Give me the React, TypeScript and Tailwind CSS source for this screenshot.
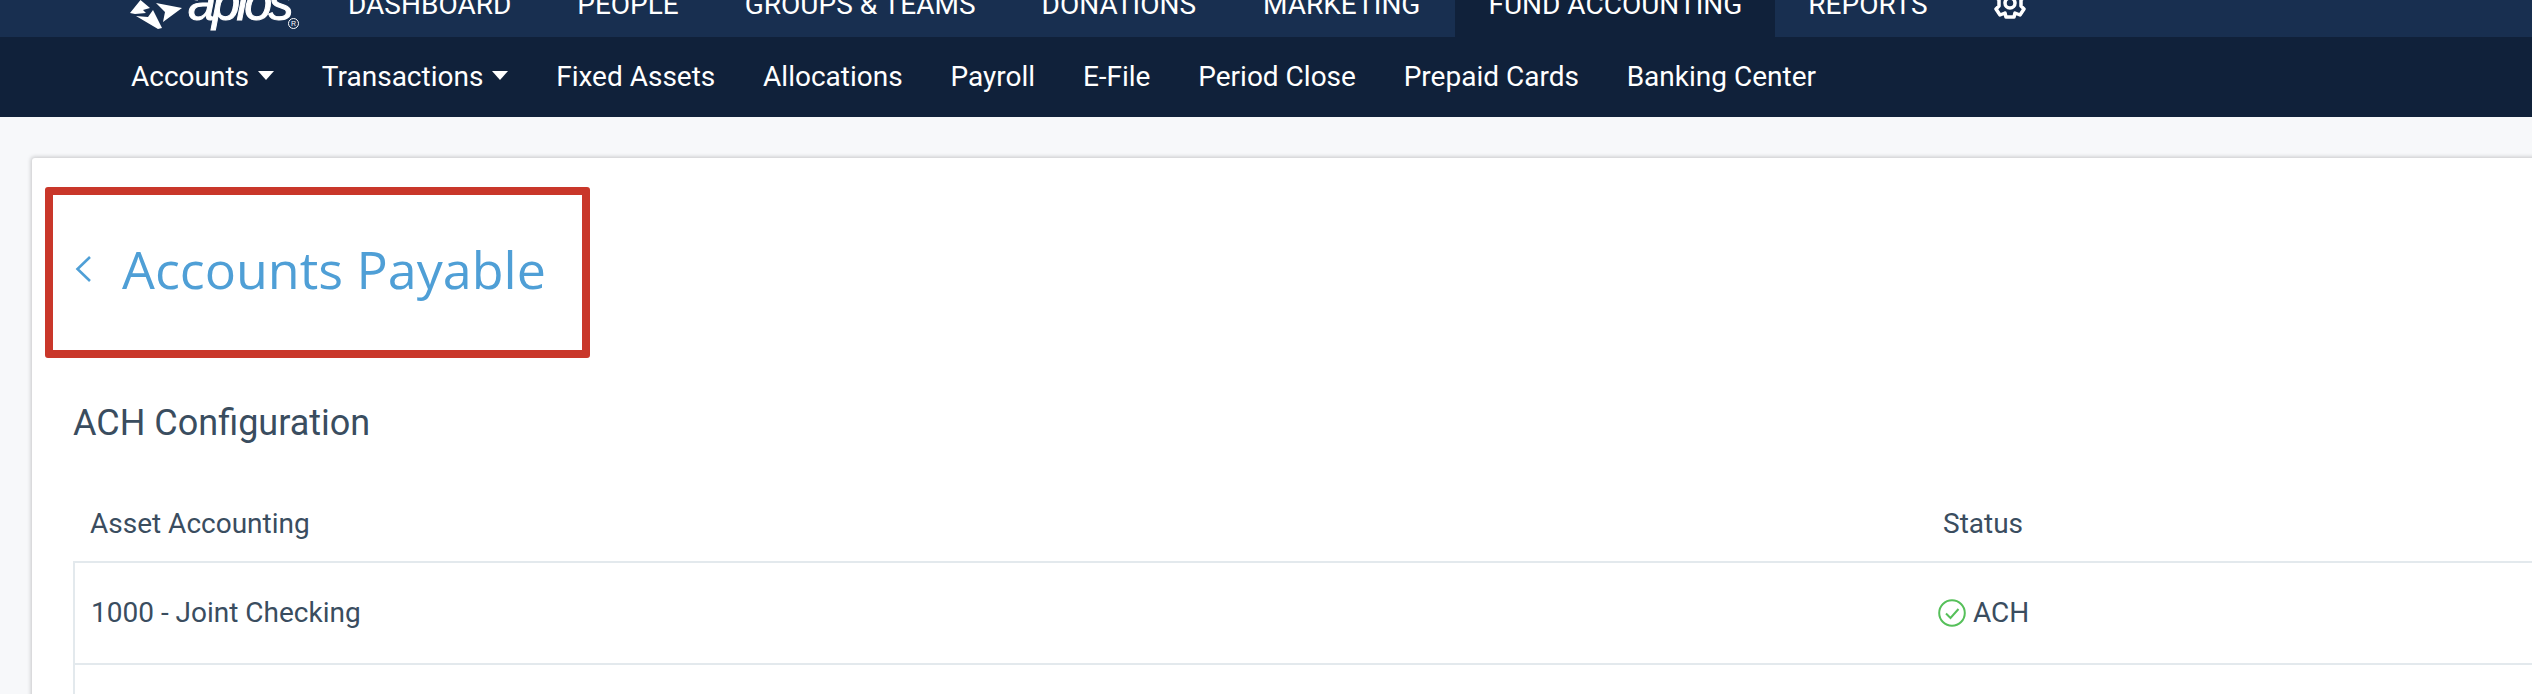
const mainLinks = [
  {label: 'DASHBOARD', className: 'pr-[33px]'},
  {label: 'PEOPLE', className: 'px-[33px]'},
  {label: 'GROUPS & TEAMS', className: 'px-[33px]'},
  {label: 'DONATIONS', className: 'px-[33px]'},
  {label: 'MARKETING', className: 'pl-[34px] pr-[35px]'},
  {label: 'FUND ACCOUNTING', className: 'px-[33px] bg-[#10213a]'},
  {label: 'REPORTS', className: 'px-[33px]'},
]

const subLinks = [
  {label: 'Accounts', caret: true},
  {label: 'Transactions', caret: true},
  {label: 'Fixed Assets'},
  {label: 'Allocations'},
  {label: 'Payroll'},
  {label: 'E-File'},
  {label: 'Period Close'},
  {label: 'Prepaid Cards'},
  {label: 'Banking Center'},
]

function AplosLogo() {
  return (
    <div className="flex items-start w-[218px] h-[37px] text-white">
      <svg width="54" height="37" viewBox="0 0 54 37" className="shrink-0" fill="currentColor">
        <path d="M0 13 L10.5 0 L20 8 L13 10 L16 13 L5 14 Z" />
        <path d="M26 3 L52 8 L33 22 L35 12 Z" />
        <path d="M6 16 L18 17 L23 10 L32 28 L28 29 Z" />
      </svg>
      <span className="ml-[4px] mt-[-22px] font-['Liberation_Sans',sans-serif] italic text-[50px] leading-[50px] tracking-[-3.5px] [-webkit-text-stroke:1px_white] whitespace-nowrap">aplos</span>
      <span className="ml-[-2px] mt-[18px] flex items-center justify-center w-[11px] h-[11px] rounded-full border border-white text-[7px] leading-none font-['Liberation_Sans',sans-serif]">R</span>
    </div>
  )
}

function GearIcon() {
  return (
    <svg width="34" height="37" viewBox="0 0 34 37" fill="none" stroke="white" strokeWidth="3.5" strokeLinejoin="round">
      <circle cx="17" cy="3" r="5" />
      <path d="M13 -11 H21 L22 -7 L27 -9 L31 -3 L28 0 V6 L31 9 L27 15 L22 13 L21 17 H13 L12 13 L7 15 L3 9 L6 6 V0 L3 -3 L7 -9 L12 -7 Z" />
    </svg>
  )
}

function CheckIcon() {
  return (
    <svg width="28" height="28" viewBox="0 0 28 28" fill="none" stroke="#56c05a" className="shrink-0">
      <circle cx="14" cy="14" r="12.8" strokeWidth="2" />
      <path d="M8 14.5 L12.5 19 L20.5 10" strokeWidth="2" />
    </svg>
  )
}

export default function App() {
  return (
    <div className="w-[2532px] h-[694px] overflow-hidden bg-[#f7f8fa] font-['Roboto',sans-serif] text-[#3a4d5f]">
      {/* Main nav, cut off at the top of the screenshot */}
      <div className="flex items-start h-[37px] pl-[130px] overflow-hidden bg-[#182f50] text-white">
        <AplosLogo />
        {mainLinks.map(link => (
          <div key={link.label} className={`h-[37px] ${link.className}`}>
            <div className="text-[28px] leading-[30px] mt-[-10px] whitespace-nowrap">{link.label}</div>
          </div>
        ))}
        <div className="ml-[32px]">
          <GearIcon />
        </div>
      </div>

      {/* Sub nav */}
      <div className="flex items-center gap-[47.8px] h-[80px] pl-[131px] bg-[#10213a] text-white text-[28px]">
        {subLinks.map(link => (
          <div key={link.label} className="flex items-center gap-[9px] whitespace-nowrap">
            <span>{link.label}</span>
            {link.caret && <span className="mb-[3px] border-x-[8px] border-x-transparent border-t-[9px] border-t-white" />}
          </div>
        ))}
      </div>

      {/* Card */}
      <div className="ml-[32px] mt-[41px] w-[2540px] h-[600px] rounded-[3px] bg-white pt-[29px] shadow-[-1px_-1px_4px_rgba(0,0,0,0.2)]">
        <div className="ml-[13px] w-[545px] h-[171px] pb-[8px] flex items-center rounded-[3px] border-[8px] border-[#c9372a] text-[#4f9fd6]">
          <svg width="17" height="28" viewBox="0 0 17 28" fill="none" stroke="currentColor" strokeWidth="2.6" className="ml-[22px] shrink-0">
            <path d="M15 2 L2.5 14 L15 26" />
          </svg>
          <h1 className="ml-[30px] font-['Open_Sans',sans-serif] text-[52px] leading-none whitespace-nowrap">Accounts Payable</h1>
        </div>

        <h2 className="ml-[41px] mt-[41px] text-[36px] leading-[48px]">ACH Configuration</h2>

        <div className="ml-[41px] mt-[39px] text-[28px]">
          <div className="grid grid-cols-[1853px_1fr] h-[75px] items-center">
            <div className="pl-[17px]">Asset Accounting</div>
            <div className="pl-[17px]">Status</div>
          </div>
          <div className="grid grid-cols-[1853px_1fr] h-[104px] items-center border-2 border-[#e3e9ed]">
            <div className="pl-[16px]">1000 - Joint Checking</div>
            <div className="pl-[10px] flex items-center gap-[7px]">
              <CheckIcon />
              <span>ACH</span>
            </div>
          </div>
          <div className="h-[104px] border-l-2 border-[#e3e9ed]" />
        </div>
      </div>
    </div>
  )
}
